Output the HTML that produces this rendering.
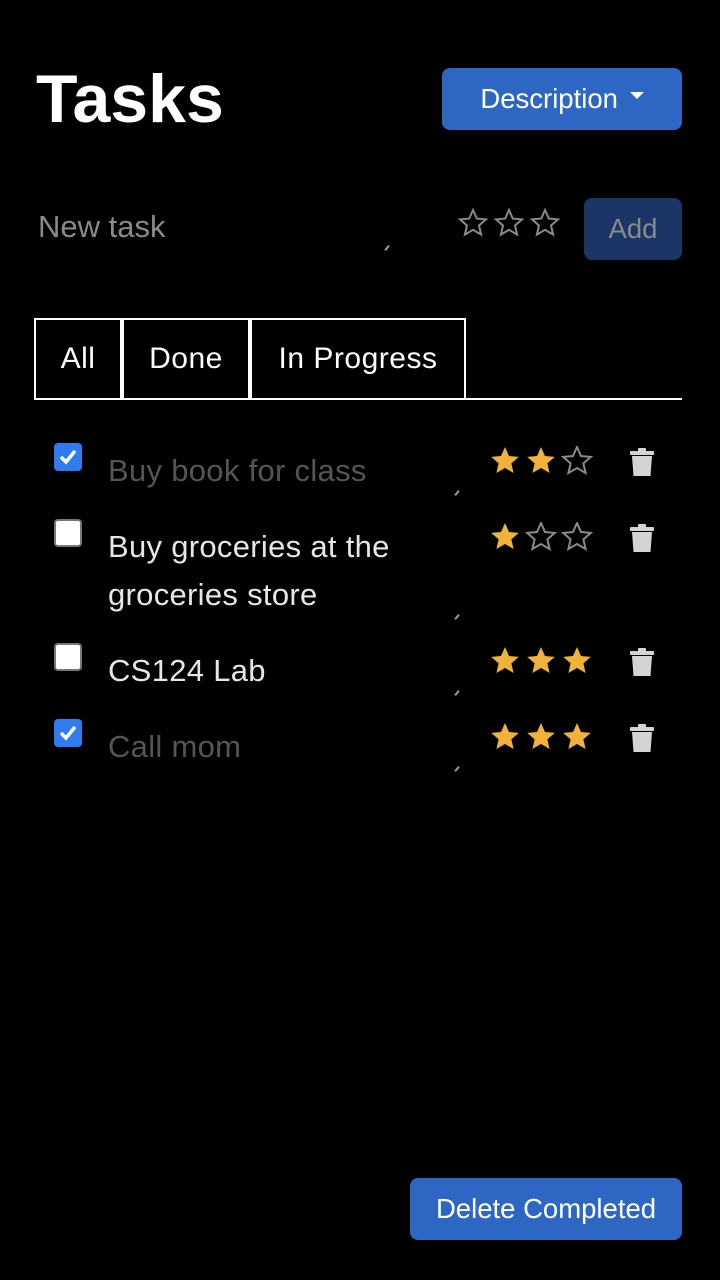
<!DOCTYPE html>
<html><head><style>
body{margin:0;width:720px;height:1280px;background:#000;font-family:"Liberation Sans",sans-serif;position:relative;overflow:hidden;color:#fff}
.a{position:absolute}
.btn{position:absolute;background:#2e67c3;border-radius:8px;color:#fff;font-size:27.5px;display:flex;align-items:center;justify-content:center}
.tab{position:absolute;top:318px;height:80px;border:2px solid #fff;border-bottom:none;box-sizing:border-box;font-size:30px;letter-spacing:0.5px;display:flex;align-items:center;justify-content:center}
.cb{position:absolute;left:54px;width:28px;height:28px;border-radius:4px;box-sizing:border-box}
.off{background:#fff;border:2px solid #777}
.on{background:#2f7bf0}
.t{position:absolute;left:108px;font-size:31px;letter-spacing:0.3px;line-height:48px;color:#e6e6e6}
.d{color:#555}
.st{position:absolute;left:490px}
.tr{position:absolute;left:630px}
.m{position:absolute;width:2px;height:6px;background:#999;transform:rotate(40deg)}
</style></head><body>
<div class="a" style="left:36px;top:60px;font-size:68px;font-weight:bold">Tasks</div>
<div class="btn" style="left:442px;top:68px;width:240px;height:62px">Description&nbsp;<span style="display:inline-block;border-left:7px solid transparent;border-right:7px solid transparent;border-top:7px solid #fff;margin-bottom:8px;margin-left:4px"></span></div>
<div class="a" style="left:38px;top:209px;font-size:31px;color:#8a8a8a">New task</div>
<div class="m" style="left:386px;top:245px"></div>
<svg class="a" style="left:458px;top:208px" width="106" height="32" viewBox="0 0 106 32"><g fill="none" stroke="#8a8a8a" stroke-width="2"><path id="s" d="M15 2l3.8 8.6 9.2.8-7 6.1 2.1 9.1-8.1-4.8-8.1 4.8 2.1-9.1-7-6.1 9.2-.8z"/><use href="#s" x="36"/><use href="#s" x="72"/></g></svg>
<div class="btn" style="left:584px;top:198px;width:98px;height:62px;background:#1a3566;color:#8a8a8a">Add</div>
<div class="tab" style="left:34px;width:88px">All</div>
<div class="tab" style="left:122px;width:128px">Done</div>
<div class="tab" style="left:250px;width:216px">In Progress</div>
<div class="a" style="left:34px;top:398px;width:648px;height:2px;background:#fff"></div>
<svg width="0" height="0" style="position:absolute"><defs>
<path id="f" d="M15 1l4 9 9.8.9-7.4 6.5 2.2 9.6L15 22l-8.6 5 2.2-9.6L1.2 10.9 11 10z"/>
<g id="tb"><rect x="0" y="4" width="24" height="4" rx="1" fill="#d4d4d4"/><rect x="8" y="1" width="8" height="4" rx="1" fill="#d4d4d4"/><path d="M2 9h20l-1.5 20h-17z" fill="#d4d4d4"/></g>
</defs></svg>
<div class="cb on" style="top:443px"><svg width="28" height="28"><path d="M7 14l5 5 9-11" stroke="#fff" stroke-width="3.5" fill="none"/></svg></div>
<div class="t d" style="top:447px">Buy book for class</div>
<div class="m" style="left:456px;top:490px"></div>
<svg class="st" style="top:446px" width="106" height="30"><use href="#f" fill="#f0b23a"/><use href="#f" x="36" fill="#f0b23a"/><use href="#f" x="72" fill="none" stroke="#8a8a8a" stroke-width="2"/></svg>
<svg class="tr" style="top:447px" width="24" height="30"><use href="#tb"/></svg>

<div class="cb off" style="top:519px"></div>
<div class="t" style="top:523px">Buy groceries at the<br>groceries store</div>
<div class="m" style="left:456px;top:614px"></div>
<svg class="st" style="top:522px" width="106" height="30"><use href="#f" fill="#f0b23a"/><use href="#f" x="36" fill="none" stroke="#8a8a8a" stroke-width="2"/><use href="#f" x="72" fill="none" stroke="#8a8a8a" stroke-width="2"/></svg>
<svg class="tr" style="top:523px" width="24" height="30"><use href="#tb"/></svg>

<div class="cb off" style="top:643px"></div>
<div class="t" style="top:647px">CS124 Lab</div>
<div class="m" style="left:456px;top:690px"></div>
<svg class="st" style="top:646px" width="106" height="30"><use href="#f" fill="#f0b23a"/><use href="#f" x="36" fill="#f0b23a"/><use href="#f" x="72" fill="#f0b23a"/></svg>
<svg class="tr" style="top:647px" width="24" height="30"><use href="#tb"/></svg>

<div class="cb on" style="top:719px"><svg width="28" height="28"><path d="M7 14l5 5 9-11" stroke="#fff" stroke-width="3.5" fill="none"/></svg></div>
<div class="t d" style="top:723px">Call mom</div>
<div class="m" style="left:456px;top:766px"></div>
<svg class="st" style="top:722px" width="106" height="30"><use href="#f" fill="#f0b23a"/><use href="#f" x="36" fill="#f0b23a"/><use href="#f" x="72" fill="#f0b23a"/></svg>
<svg class="tr" style="top:723px" width="24" height="30"><use href="#tb"/></svg>

<div class="btn" style="left:410px;top:1178px;width:272px;height:62px">Delete Completed</div>
</body></html>
